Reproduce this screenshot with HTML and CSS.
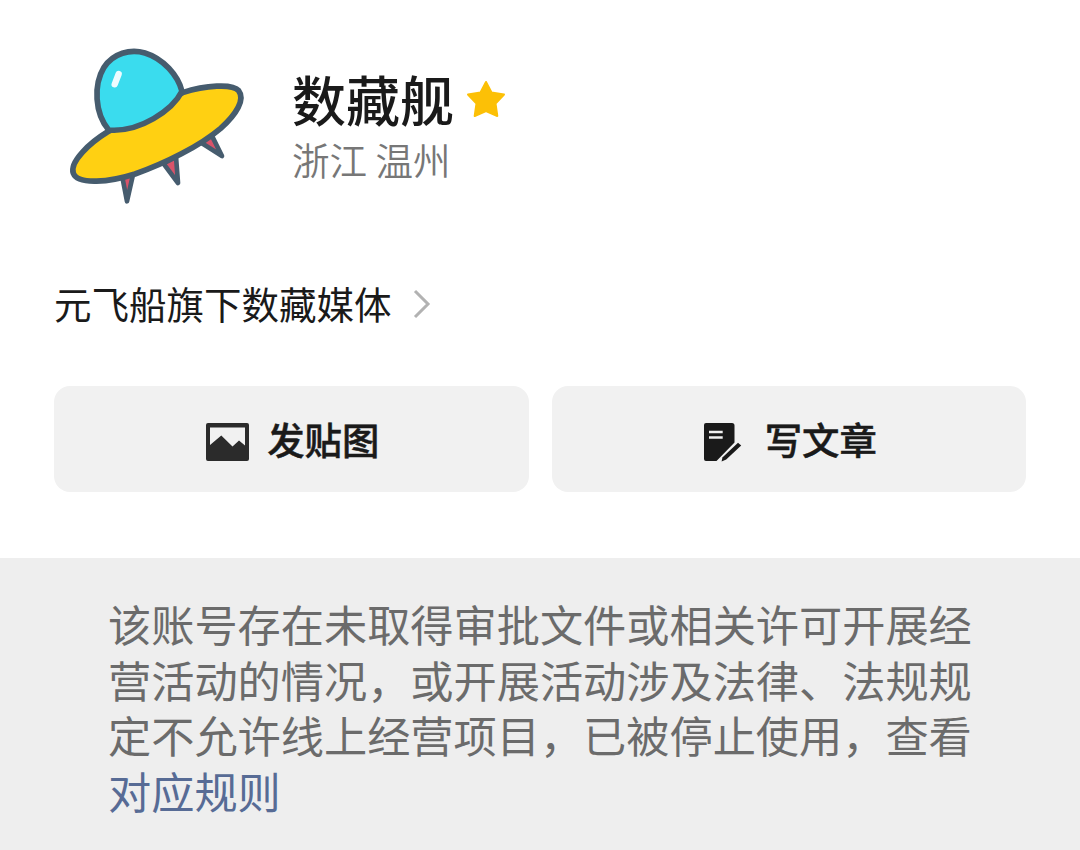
FILE: index.html
```html
<!DOCTYPE html>
<html lang="zh-CN">
<head>
  <meta charset="utf-8">
  <title>数藏舰</title>
  <link rel="stylesheet" href="styles.css">
</head>
<body>

  <div class="profile">
    <div class="header">
      <svg class="avatar" viewBox="0 0 660 570">
        <g stroke="#465c6e" stroke-width="14" stroke-linejoin="round" fill="#d9536a">
          <path d="M216 436 L231 514 L250 430 Z"/>
          <path d="M340 400 L384 459 L378 380 Z"/>
          <path d="M450 336 L516 378 L484 314 Z"/>
        </g>
        <path d="M172 306 C120 338 58 395 70 430 C84 466 180 456 255 432 C345 400 450 348 512 295 C560 252 586 208 566 182 C548 160 465 166 398 188 Z" fill="#ffd012" stroke="#465c6e" stroke-width="17" stroke-linejoin="round"/>
        <path d="M176 300 C134 250 130 165 162 112 C190 70 240 56 285 69 C340 86 384 136 396 184 C368 240 270 308 176 300 Z" fill="#3adcee" stroke="#465c6e" stroke-width="17" stroke-linejoin="round"/>
        <path d="M206 132 L194 163" stroke="#eefcff" stroke-width="19" stroke-linecap="round"/>
      </svg>
      <div class="info">
        <h1 class="name">数藏舰
          <svg class="star" viewBox="0 0 40 38"><path d="M20 2 L25.5 12.5 L38 14.5 L29.5 23.5 L31.3 36 L20 31 L8.7 36 L10.5 23.5 L2 14.5 L14.5 12.5 Z"/></svg>
        </h1>
        <p class="location">浙江 温州</p>
      </div>
    </div>

    <div class="intro">
      <span>元飞船旗下数藏媒体</span>
      <svg class="arrow" viewBox="0 0 18 30"><path d="M2 2 L15 15 L2 28"/></svg>
    </div>

    <div class="actions">
      <button class="btn">
        <svg class="icon-image" viewBox="0 0 43 38">
          <path fill-rule="evenodd" d="M2 0 H41 Q43 0 43 2 V36 Q43 38 41 38 H2 Q0 38 0 36 V2 Q0 0 2 0 Z M4 4.5 V22 L15.3 12.5 L26.5 23.5 L33 17.5 L39 22.5 V4.5 Z"/>
        </svg>
        <span>发贴图</span>
      </button>
      <button class="btn">
        <svg class="icon-write" viewBox="0 0 38 39">
          <path fill-rule="evenodd" d="M2 0 H28 Q30.5 0 30.5 2.5 V19.5 L12.5 38 H2 Q0 38 0 36 V2 Q0 0 2 0 Z M5 7.7 V10.2 H18.7 V7.7 Z M5 13.3 V15.8 H18.7 V13.3 Z"/>
          <path d="M34 19.8 L37.2 22.6 L22.2 36.6 L17.6 38.4 L18.4 34.6 Z"/>
        </svg>
        <span>写文章</span>
      </button>
    </div>
  </div>

  <div class="notice">
    该账号存在未取得审批文件或相关许可开展经营活动的情况，或开展活动涉及法律、法规规定不允许线上经营项目，已被停止使用，查看<a class="link">对应规则</a>
  </div>

</body>
</html>
```
FILE: styles.css
```css
* {
  box-sizing: border-box;
}

body {
  margin: 0;
  height: 850px;
  display: flex;
  flex-direction: column;
  overflow: hidden;
  background-color: #fff;
  font-family: "Noto Sans CJK SC", sans-serif;
  color: #1a1a1a;
}

.profile {
  height: 558px;
  padding: 30px 54px 0;
}

.header {
  display: flex;
  height: 190px;
  margin-left: -4px;
}

.avatar {
  width: 220px;
  height: 190px;
}

.info {
  padding: 37px 0 0 22px;
}

.name {
  display: flex;
  align-items: center;
  margin: 0;
  font-size: 54px;
  font-weight: 500;
  line-height: 64px;
}

.star {
  width: 40px;
  height: 38px;
  margin: 0 0 0 12px;
  fill: #fcc006;
  stroke: #fcc006;
  stroke-width: 2;
  stroke-linejoin: round;
}

.location {
  margin: 0;
  font-size: 37.6px;
  font-weight: 350;
  line-height: 56px;
  color: #777;
}

.intro {
  display: flex;
  align-items: center;
  height: 60px;
  margin-top: 52px;
  font-size: 37.5px;
}

.arrow {
  width: 18px;
  height: 30px;
  margin: 3px 0 0 21px;
  fill: none;
  stroke: #b2b2b2;
  stroke-width: 3;
}

.actions {
  display: flex;
  gap: 23px;
  margin-top: 54px;
}

.btn {
  flex: 1;
  display: flex;
  align-items: center;
  justify-content: center;
  height: 106px;
  padding: 0 0 0 3px;
  border: none;
  border-radius: 16px;
  background-color: #f1f1f1;
  color: #1a1a1a;
  font-family: inherit;
  font-size: 37.4px;
  font-weight: 500;
  -webkit-text-stroke: 0.5px #1a1a1a;
}

.icon-image {
  width: 43px;
  height: 38px;
  margin: 6px 18px 0 0;
  fill: #2b2b2b;
}

.icon-write {
  width: 38px;
  height: 39px;
  margin: 7px 23px 0 0;
  fill: #1a1a1a;
}

.notice {
  flex: 1;
  padding: 38px 108px 0;
  background-color: #eee;
  font-size: 43.2px;
  line-height: 55.6px;
  color: #6b6b6b;
}

.link {
  color: #576b95;
}
```
